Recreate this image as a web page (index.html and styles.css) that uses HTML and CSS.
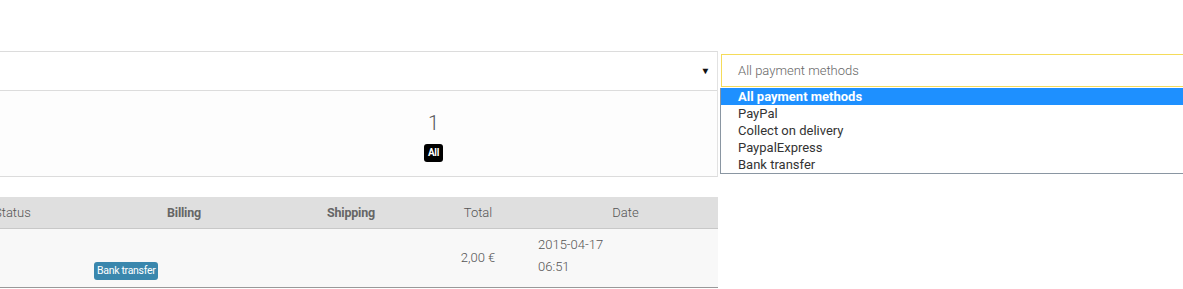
FILE: index.html
```html
<!DOCTYPE html>
<html>
<head>
<meta charset="utf-8">
<link rel="stylesheet" href="styles.css">
</head>
<body>
<div class="page">
  <div class="main">
    <div class="filters">
      <div class="filter-row">
        <span class="caret">▼</span>
      </div>
      <div class="stats-row">
        <div class="stat-spacer"></div>
        <div class="stat">
          <div class="stat-num">1</div>
          <span class="badge-all">All</span>
        </div>
      </div>
    </div>
    <table class="orders">
      <thead>
        <tr>
          <th class="c-status">Status</th>
          <th class="c-billing strong">Billing</th>
          <th class="c-shipping strong">Shipping</th>
          <th class="c-total">Total</th>
          <th class="c-date">Date</th>
        </tr>
      </thead>
      <tbody>
        <tr>
          <td class="c-status"></td>
          <td class="c-billing"><span class="badge-pay">Bank transfer</span></td>
          <td class="c-shipping"></td>
          <td class="c-total">2,00 €</td>
          <td class="c-date">2015-04-17<br>06:51</td>
        </tr>
      </tbody>
    </table>
  </div>
  <div class="side">
    <div class="select">All payment methods</div>
    <ul class="options">
      <li class="opt active">All payment methods</li>
      <li class="opt">PayPal</li>
      <li class="opt">Collect on delivery</li>
      <li class="opt">PaypalExpress</li>
      <li class="opt">Bank transfer</li>
    </ul>
  </div>
</div>
</body>
</html>
```
FILE: styles.css
```css
html, body {
  margin: 0;
  padding: 0;
  background: #fff;
  font-family: Roboto, "Liberation Sans", sans-serif;
  overflow: hidden;
}
.page {
  display: flex;
  align-items: flex-start;
  margin-left: -11px;
  padding-top: 51px;
  width: 1300px;
}
.main {
  width: 729px;
  flex: none;
}
.filters {
  border: 1px solid #dcdcdc;
  border-right-color: #e2e2e2;
}
.filter-row {
  height: 38px;
  border-bottom: 1px solid #dcdcdc;
  display: flex;
  align-items: center;
  justify-content: flex-end;
  padding-right: 7px;
}
.caret {
  font-size: 9px;
  color: #111;
  transform: scaleX(1.1);
}
.stats-row {
  height: 85px;
  background: #fdfdfd;
  display: flex;
}
.stat-spacer {
  width: 160px;
}
.stat {
  flex: 1;
  display: flex;
  flex-direction: column;
  align-items: center;
  padding-top: 20px;
}
.stat-num {
  font-size: 20px;
  font-weight: 300;
  color: #555;
  line-height: 24px;
}
.badge-all {
  margin-top: 9px;
  background: #000;
  color: #fff;
  font-size: 10px;
  font-weight: 700;
  border-radius: 3px;
  padding: 2px 4px;
  line-height: 14px;
  letter-spacing: -0.3px;
}
.orders {
  margin-top: 20px;
  width: 729px;
  border-collapse: collapse;
  table-layout: fixed;
}
.orders th,
.orders td {
  box-sizing: border-box;
}
.orders th {
  background: #dfdfdf;
  height: 31px;
  padding: 0 5px;
  font-size: 13px;
  font-weight: 300;
  color: #555;
  border-bottom: 1px solid #c8c8c8;
  text-align: center;
}
.orders th.c-status { text-align: left; }
.orders th.strong {
  font-weight: 700;
  font-size: 12.5px;
  letter-spacing: -0.2px;
  color: #666;
}
.c-status { width: 100px; }
.c-billing { width: 190px; }
.c-shipping { width: 144px; }
.c-total { width: 110px; }
.c-date { width: 185px; }
.orders td {
  background: #f8f8f8;
  height: 59px;
  padding: 0 5px;
  font-size: 13px;
  font-weight: 300;
  color: #555;
  border-bottom: 1px solid #999;
  vertical-align: middle;
}
.orders td.c-total { text-align: center; }
.orders td.c-billing {
  vertical-align: bottom;
  padding-bottom: 7px;
}
.orders td.c-date {
  line-height: 22px;
  padding-bottom: 4px;
}
.badge-pay {
  display: inline-block;
  background: #3a87ad;
  color: #fff;
  font-size: 10.5px;
  font-weight: 400;
  border-radius: 3px;
  padding: 0 3px;
  line-height: 18px;
  letter-spacing: -0.3px;
}
.side {
  position: relative;
  margin-left: 3px;
  margin-top: 3px;
  width: 480px;
}
.select {
  height: 31px;
  border: 1px solid #f5dc5a;
  line-height: 31px;
  padding-left: 16px;
  font-size: 13px;
  font-weight: 300;
  color: #666;
  background: #fff;
}
.options {
  position: absolute;
  left: -1px;
  top: 34px;
  right: 0;
  margin: 0;
  padding: 0;
  list-style: none;
  border: 1px solid #8a96a2;
  border-top: none;
  background: #fff;
}
.opt {
  height: 17px;
  line-height: 17px;
  padding-left: 17px;
  font-size: 13px;
  color: #333;
}
.opt.active {
  background: #1e90ff;
  color: #fff;
  font-weight: 700;
}
```
